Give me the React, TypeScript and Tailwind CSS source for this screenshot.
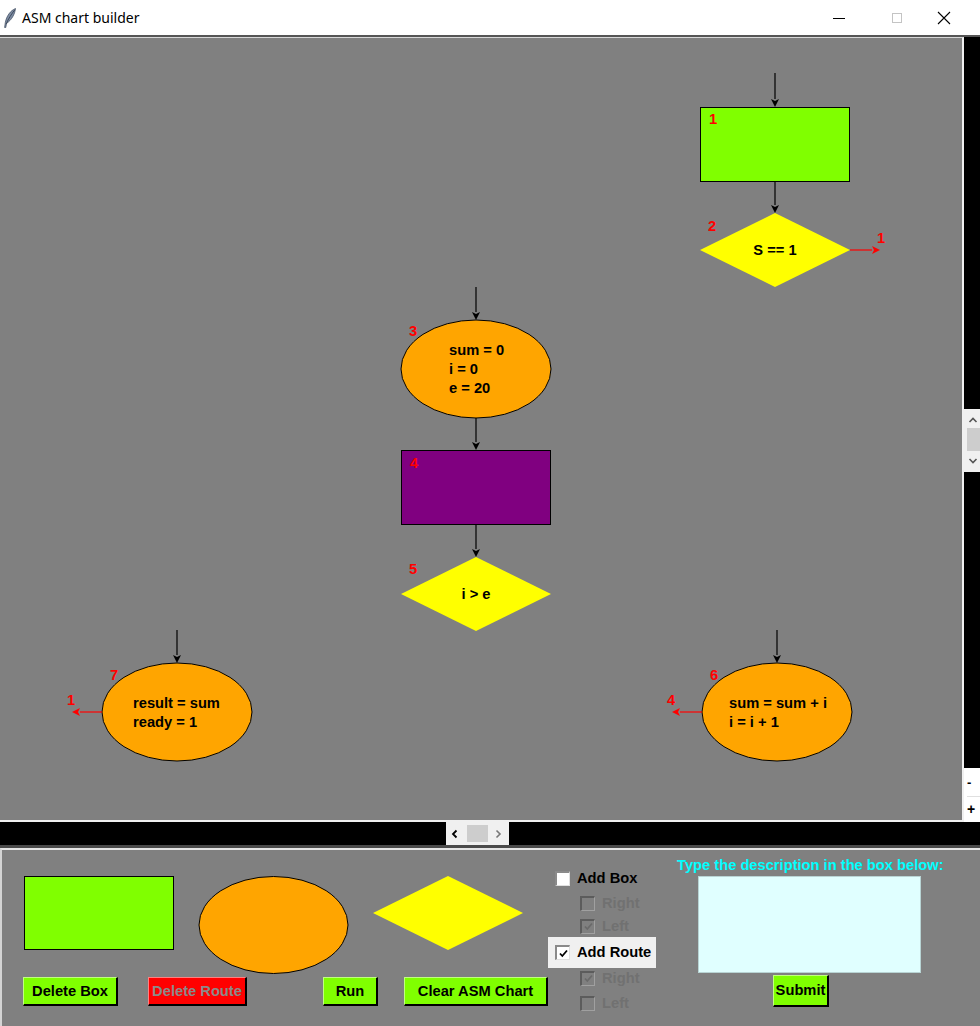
import type { ReactNode } from 'react';

type Pt = { x1: number; y1: number; x2: number; y2: number; color?: string };

// line with a filled head at (x2, y2)
function Arrow({ x1, y1, x2, y2, color = '#000000' }: Pt) {
  const len = Math.hypot(x2 - x1, y2 - y1);
  const ux = (x2 - x1) / len;
  const uy = (y2 - y1) / len;
  const bx = x2 - ux * 8;
  const by = y2 - uy * 8;
  const head = `${x2},${y2} ${bx - uy * 4},${by + ux * 4} ${bx + ux * 2},${by + uy * 2} ${bx + uy * 4},${by - ux * 4}`;
  return (
    <g>
      <line x1={x1} y1={y1} x2={bx} y2={by} stroke={color} strokeWidth={1.2} />
      <polygon points={head} fill={color} />
    </g>
  );
}

function Num({ x, y, n }: { x: number; y: number; n: string }) {
  return (
    <text x={x} y={y} fill="#ff0000" fontSize={14.7} fontWeight="bold" textAnchor="middle" dominantBaseline="central">
      {n}
    </text>
  );
}

function Lines({ x, y, lines }: { x: number; y: number; lines: string[] }) {
  return (
    <text fill="#000000" fontSize={14.7} fontWeight="bold">
      {lines.map((l, i) => (
        <tspan key={i} x={x} y={y + i * 19} dominantBaseline="central">
          {l}
        </tspan>
      ))}
    </text>
  );
}

const diamond = (cx: number, cy: number) =>
  `${cx - 75},${cy} ${cx},${cy - 37} ${cx + 75},${cy} ${cx},${cy + 37}`;

function Chart() {
  return (
    <svg
      width={962}
      height={782}
      viewBox="0 38 962 782"
      className="block font-['Liberation_Sans',Arial,sans-serif]"
    >
      {/* state 1 / decision 2 */}
      <Arrow x1={775} y1={73} x2={775} y2={107} />
      <rect x={700.5} y={107.5} width={149} height={74} fill="#80ff00" stroke="#000000" />
      <Num x={713} y={119} n="1" />
      <Arrow x1={775} y1={182} x2={775} y2={213} />
      <polygon points={diamond(775, 250)} fill="#ffff00" />
      <Num x={712} y={226} n="2" />
      <text x={775} y={250} fontSize={14.7} fontWeight="bold" textAnchor="middle" dominantBaseline="central">
        S == 1
      </text>
      <Arrow x1={850} y1={250} x2={880} y2={250} color="#ff0000" />
      <Num x={881} y={238} n="1" />

      {/* middle column */}
      <Arrow x1={476} y1={287} x2={476} y2={320} />
      <ellipse cx={476} cy={369} rx={75} ry={49} fill="#ffa500" stroke="#000000" />
      <Num x={413} y={331} n="3" />
      <Lines x={449} y={350} lines={['sum = 0', 'i = 0', 'e = 20']} />
      <Arrow x1={476} y1={418} x2={476} y2={450} />
      <rect x={401.5} y={450.5} width={149} height={74} fill="#800080" stroke="#000000" />
      <Num x={414} y={463} n="4" />
      <Arrow x1={476} y1={525} x2={476} y2={557} />
      <polygon points={diamond(476, 594)} fill="#ffff00" />
      <Num x={413} y={569} n="5" />
      <text x={476} y={594} fontSize={14.7} fontWeight="bold" textAnchor="middle" dominantBaseline="central">
        i &gt; e
      </text>

      {/* state 7 */}
      <Arrow x1={177} y1={630} x2={177} y2={663} />
      <ellipse cx={177} cy={712} rx={75} ry={49} fill="#ffa500" stroke="#000000" />
      <Num x={114} y={675} n="7" />
      <Lines x={133} y={703} lines={['result = sum', 'ready = 1']} />
      <Arrow x1={102} y1={712} x2={72} y2={712} color="#ff0000" />
      <Num x={71} y={700} n="1" />

      {/* state 6 */}
      <Arrow x1={777} y1={630} x2={777} y2={663} />
      <ellipse cx={777} cy={712} rx={75} ry={49} fill="#ffa500" stroke="#000000" />
      <Num x={714} y={675} n="6" />
      <Lines x={729} y={703} lines={['sum = sum + i', 'i = i + 1']} />
      <Arrow x1={702} y1={712} x2={672} y2={712} color="#ff0000" />
      <Num x={671} y={700} n="4" />
    </svg>
  );
}

function TkButton({ children, red, className = '' }: { children: ReactNode; red?: boolean; className?: string }) {
  return (
    <button
      type="button"
      className={
        'flex items-center justify-center whitespace-nowrap border-t border-l border-r-2 border-b-2 border-r-[#000000] border-b-[#000000] text-[14.7px] font-bold leading-none ' +
        (red
          ? 'bg-[#ff0000] border-t-[#ff8080] border-l-[#ff8080] text-[#8a8a8a] '
          : 'bg-[#80ff00] border-t-[#c0ff80] border-l-[#c0ff80] text-[#000000] ') +
        className
      }
    >
      {children}
    </button>
  );
}

function Check({ checked, disabled }: { checked?: boolean; disabled?: boolean }) {
  return (
    <span
      className={
        'flex h-[15px] w-[15px] shrink-0 items-center justify-center border-t-2 border-l-2 border-r border-b ' +
        (disabled
          ? 'border-t-[#5c5c5c] border-l-[#5c5c5c] border-r-[#a0a0a0] border-b-[#a0a0a0] bg-[#808080]'
          : 'border-t-[#8a8a8a] border-l-[#8a8a8a] border-r-[#e0e0e0] border-b-[#e0e0e0] bg-[#ffffff]')
      }
    >
      {checked && (
        <svg width={9} height={9} viewBox="0 0 9 9">
          <path d="M1 4.5 L3.3 7 L8 1.5" fill="none" stroke={disabled ? '#6a6a6a' : '#000000'} strokeWidth={1.8} />
        </svg>
      )}
    </span>
  );
}

function Option({ label, checked, sub, className = '' }: { label: string; checked?: boolean; sub?: boolean; className?: string }) {
  return (
    <div className={'flex items-center gap-[7px] ' + (sub ? 'pl-[32px] ' : 'pl-[7px] ') + className}>
      <Check checked={checked} disabled={sub} />
      <span className={'text-[14.7px] font-bold leading-none ' + (sub ? 'text-[#717171]' : 'text-[#000000]')}>{label}</span>
    </div>
  );
}

export default function App() {
  return (
    <div className="flex h-[1026px] w-[980px] flex-col overflow-hidden bg-[#ffffff] font-['Liberation_Sans',Arial,sans-serif]">
      {/* window title bar */}
      <div className="flex h-[35px] shrink-0 items-center bg-[#ffffff]">
        <svg width={13} height={20} viewBox="0 0 13 20" className="ml-[3px]">
          <path d="M12.5 0.5 C7.5 2.5 3.5 8 2.3 14.5 L1.6 19.5 L2.8 19.5 L3.5 15.5 C8.5 12 11.8 6.5 12.5 0.5 Z" fill="#7d8ca3" stroke="#3d4a5e" strokeWidth={0.7} />
          <path d="M11.8 1.8 C8.5 6 5.5 10.5 3.2 16" stroke="#2f3a4a" strokeWidth={0.8} fill="none" />
        </svg>
        <span className="ml-[6px] font-['Noto_Sans','Open_Sans',sans-serif] text-[14px] text-[#000000]">ASM chart builder</span>
        <div className="ml-auto flex h-full items-center">
          <svg width={12} height={12} viewBox="0 0 12 12" className="mr-[46px]">
            <line x1={0} y1={6.5} x2={12} y2={6.5} stroke="#000000" strokeWidth={1} />
          </svg>
          <svg width={12} height={12} viewBox="0 0 12 12" className="mr-[34px]">
            <rect x={1.5} y={1.5} width={9} height={9} fill="none" stroke="#c4c4c4" />
          </svg>
          <svg width={14} height={14} viewBox="0 0 14 14" className="mr-[29px]">
            <path d="M1 1 L13 13 M13 1 L1 13" stroke="#000000" strokeWidth={1.1} />
          </svg>
        </div>
      </div>
      <div className="h-[2px] shrink-0 bg-[#555555]" />

      {/* canvas + vertical scroll strip */}
      <div className="flex h-[785px] shrink-0">
        <div className="w-[964px] border-t border-r-2 border-b-2 border-t-[#d8d8d8] border-r-[#f0f0f0] border-b-[#f0f0f0] bg-[#808080]">
          <Chart />
        </div>
        <div className="flex w-[16px] flex-col bg-[#000000]">
          <div className="mt-[372px] flex h-[63px] flex-col items-center bg-[#f0f0f0] pl-[2px]">
            <svg width={10} height={10} viewBox="0 0 10 10" className="mt-[6px]">
              <path d="M1.5 7 L5 3.5 L8.5 7" fill="none" stroke="#555555" strokeWidth={1.6} />
            </svg>
            <div className="mt-[3px] h-[23px] w-[13px] bg-[#cdcdcd]" />
            <svg width={10} height={10} viewBox="0 0 10 10" className="mt-[5px]">
              <path d="M1.5 3 L5 6.5 L8.5 3" fill="none" stroke="#555555" strokeWidth={1.6} />
            </svg>
          </div>
          <div className="mt-auto flex h-[54px] flex-col bg-[#ffffff] pl-[3px]">
            <div className="flex h-[29px] items-center border-b border-b-[#e0e0e0] text-[13px] font-bold leading-none text-[#000000]">-</div>
            <div className="flex h-[24px] items-center text-[14px] font-bold leading-none text-[#000000]">+</div>
          </div>
        </div>
      </div>

      {/* horizontal scroll strip */}
      <div className="flex h-[23px] shrink-0 bg-[#000000]">
        <div className="ml-[446px] flex h-full w-[63px] items-center bg-[#f0f0f0]">
          <svg width={10} height={10} viewBox="0 0 10 10" className="ml-[4px]">
            <path d="M6.5 1.5 L3 5 L6.5 8.5" fill="none" stroke="#000000" strokeWidth={1.8} />
          </svg>
          <div className="ml-[7px] h-[17px] w-[21px] bg-[#cdcdcd]" />
          <svg width={10} height={10} viewBox="0 0 10 10" className="ml-[5px]">
            <path d="M3.5 1.5 L7 5 L3.5 8.5" fill="none" stroke="#777777" strokeWidth={1.6} />
          </svg>
        </div>
      </div>
      <div className="h-[3px] shrink-0 bg-[#4a4a4a]" />

      {/* control panel */}
      <div className="flex min-h-0 flex-1 border-t-2 border-l-2 border-t-[#e4e4e4] border-l-[#d4d4d4] bg-[#808080]">
        <div className="ml-[21px] mt-[26px] flex w-[525px] flex-col">
          <svg width={525} height={99} viewBox="0 0 525 99" className="block">
            <rect x={1.5} y={0.5} width={149} height={73} fill="#80ff00" stroke="#000000" />
            <ellipse cx={250.5} cy={49} rx={74.5} ry={48.5} fill="#ffa500" stroke="#000000" />
            <polygon points="350,37 425,0 500,37 425,74" fill="#ffff00" />
          </svg>
          <div className="mt-[2px] flex h-[29px]">
            <TkButton className="w-[95px]">Delete Box</TkButton>
            <TkButton red className="ml-[30px] w-[99px]">Delete Route</TkButton>
            <TkButton className="ml-[76px] w-[55px]">Run</TkButton>
            <TkButton className="ml-[26px] w-[144px]">Clear ASM Chart</TkButton>
          </div>
        </div>

        <div className="mt-[16px] flex w-[108px] flex-col">
          <Option label="Add Box" className="h-[25px]" />
          <Option label="Right" sub className="h-[25px]" />
          <Option label="Left" sub checked className="h-[21px] pb-[1px]" />
          <Option label="Add Route" checked className="h-[31px] bg-[#f0f0f0]" />
          <Option label="Right" sub checked className="h-[20px]" />
          <Option label="Left" sub className="h-[30px]" />
        </div>

        <div className="ml-[21px] mt-[7px] flex w-[266px] flex-col">
          <div className="whitespace-nowrap text-[14.7px] font-bold leading-[16px] text-[#00ffff]">
            Type the description in the box below:
          </div>
          <textarea className="ml-[21px] mt-[3px] h-[97px] w-[223px] resize-none border border-[#b8d4d4] bg-[#e0ffff] outline-none" />
          <TkButton className="ml-[96px] mt-[2px] h-[32px] w-[56px]">Submit</TkButton>
        </div>
      </div>
    </div>
  );
}
